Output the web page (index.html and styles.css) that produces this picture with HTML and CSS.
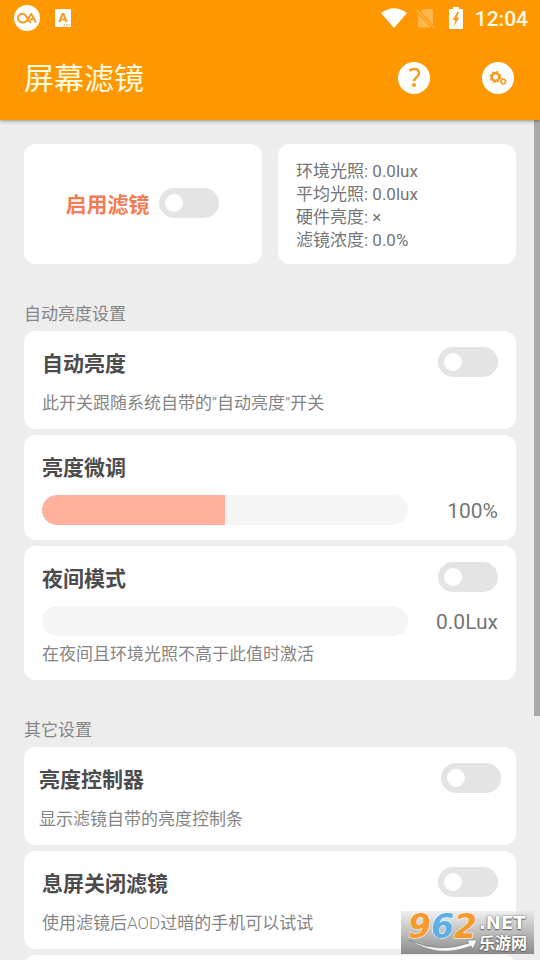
FILE: index.html
```html
<!DOCTYPE html>
<html lang="zh-CN">
<head>
<meta charset="utf-8">
<meta name="viewport" content="width=device-width, initial-scale=1">
<title>屏幕滤镜</title>
<link rel="stylesheet" href="styles.css">
</head>
<body>
<header class="header">
  <div class="status">
    <div class="status-left">
      <svg width="26" height="26" viewBox="0 0 26 26" aria-hidden="true">
        <circle cx="13" cy="13" r="13" fill="#fff"/>
        <path d="M13.600 14.800C12.300 16.800 10.600 17.500 8.800 17.500C6 17.500 4 15.600 4 13.100C4 10.600 6 8.800 8.800 8.800C13 8.800 13.300 17.300 17 17.300M12.600 16.400L17.200 8.800L21.800 17.400M15.800 14.200H19.500" fill="none" stroke="#f59a23" stroke-width="1.900" stroke-linejoin="round"/>
      </svg>
      <svg width="16" height="18" viewBox="0 0 16 18" aria-hidden="true">
        <rect width="16" height="18" rx="1" fill="#fff"/>
        <path d="M3.400 13L6.700 4H9.200L12.600 13H10.200L9.600 11.200H6.300L5.700 13ZM6.900 9.400H9L8 6.300Z" fill="#f59a23" fill-rule="evenodd"/>
        <path d="M8.500 16h1.600M11 16h1.600M13.400 16h1.600" stroke="#f59a23" stroke-width="1"/>
      </svg>
    </div>
    <div class="status-right">
      <svg width="26" height="22" viewBox="0 0 26 22" aria-hidden="true"><path d="M0 6Q13-3.500 26 6L13 21Z" fill="#fff"/></svg>
      <svg class="sim" width="20" height="22" viewBox="0 0 20 22" aria-hidden="true">
        <path d="M6.500 2H14.500Q16 2 16 3.500V17L3.500 4.500ZM1 7L14.500 20.500H2.500Q1 20.500 1 19Z" fill="#ffb74d"/>
        <path d="M-.5 3L17.500 21" stroke="#ffb74d" stroke-width="1.500"/>
      </svg>
      <svg width="18" height="22" viewBox="0 0 18 22" aria-hidden="true">
        <path d="M6 0h6v2h3q1 0 1 1v18q0 1-1 1h-12q-1 0-1-1v-18q0-1 1-1H6Z" fill="#fff"/>
        <path d="M10.500 5L5.500 13H8.200L7 19L12.500 10.500H9.700L12 5.500Z" fill="#f59a23"/>
      </svg>
      <span class="time">12:04</span>
    </div>
  </div>
  <div class="appbar">
    <h1>屏幕滤镜</h1>
    <div class="actions">
      <button type="button" aria-label="帮助">
        <svg width="32" height="32" viewBox="0 0 32 32"><circle cx="16" cy="16" r="16" fill="#fff"/><path d="M11.300 8.800Q13.500 7 16.200 7Q21 7 21 11.600C21 15 16 15.500 16 19.300" fill="none" stroke="#f59a23" stroke-width="2.400"/><circle cx="16" cy="23" r="2" fill="#f59a23"/></svg>
      </button>
      <button type="button" aria-label="设置">
        <svg width="32" height="32" viewBox="0 0 32 32"><circle cx="16" cy="16" r="16" fill="#fff"/><g fill="none" stroke="#f59a23"><circle cx="13.500" cy="15" r="3.700" stroke-width="2.400"/><circle cx="13.500" cy="15" r="5.300" stroke-width="1.500" stroke-dasharray="2.200 1.963"/><circle cx="21.300" cy="19.500" r="2.100" stroke-width="1.400"/><circle cx="21.300" cy="19.500" r="3" stroke-width="1" stroke-dasharray="1.200 1.156"/></g></svg>
      </button>
    </div>
  </div>
</header>

<main class="content">
  <div class="overview">
    <section class="card enable">
      <label for="enable">启用滤镜</label>
      <input class="toggle" type="checkbox" id="enable">
    </section>
    <section class="card info">
      <div>环境光照: 0.0lux</div>
      <div>平均光照: 0.0lux</div>
      <div>硬件亮度: ×</div>
      <div>滤镜浓度: 0.0%</div>
    </section>
  </div>

  <h2>自动亮度设置</h2>
  <div class="group">
    <section class="card">
      <div class="row"><label for="auto">自动亮度</label><input class="toggle" type="checkbox" id="auto"></div>
      <p>此开关跟随系统自带的<span class="thin">“</span>自动亮度<span class="thin">”</span>开关</p>
    </section>
    <section class="card">
      <div class="row"><label for="tune">亮度微调</label></div>
      <div class="slider-row"><input class="slider half" type="range" id="tune" min="0" max="200" value="100"><output for="tune">100%</output></div>
    </section>
    <section class="card">
      <div class="row"><label for="night">夜间模式</label><input class="toggle" type="checkbox" id="night"></div>
      <div class="slider-row"><input class="slider" type="range" id="lux" min="0" max="100" value="0" aria-label="环境光照阈值"><output for="lux">0.0Lux</output></div>
      <p class="close">在夜间且环境光照不高于此值时激活</p>
    </section>
  </div>

  <h2>其它设置</h2>
  <div class="group">
    <section class="card wide">
      <div class="row"><label for="controller">亮度控制器</label><input class="toggle" type="checkbox" id="controller"></div>
      <p>显示滤镜自带的亮度控制条</p>
    </section>
    <section class="card">
      <div class="row"><label for="screenoff">息屏关闭滤镜</label><input class="toggle" type="checkbox" id="screenoff"></div>
      <p>使用滤镜后<span class="thin">AOD</span>过暗的手机可以试试</p>
    </section>
    <section class="card next"></section>
  </div>
  <div class="scroll-thumb"></div>
</main>

<div class="watermark">
  <div class="digits"><span class="orange">9</span><span class="blue">6</span><span class="orange">2</span></div>
  <div class="site"><span class="net">.NET</span><span class="name">乐游网</span></div>
  <svg class="swoosh" width="70" height="14" viewBox="0 0 70 14" aria-hidden="true"><path d="M1 1Q30 15 61 4L59 1L69 1L65 10L63 7Q30 20 1 1Z" fill="#f4f4f4" stroke="#777" stroke-width=".6"/></svg>
</div>
</body>
</html>
```
FILE: styles.css
```css
* { box-sizing: border-box; }

body {
  margin: 0;
  height: 100vh;
  display: flex;
  flex-direction: column;
  overflow: hidden;
  background: #ededed;
  color: #757575;
  font-family: Roboto, "Noto Sans CJK SC", sans-serif;
  font-size: 17px;
}

h1, h2, p { margin: 0; font-weight: 400; }
svg { display: block; }

.header {
  position: relative;
  z-index: 1;
  background: #ff9800;
  box-shadow: 0 1px 4px rgba(0, 0, 0, .4);
}

.status {
  display: flex;
  justify-content: space-between;
  align-items: center;
  height: 36px;
  padding: 0 12px 0 14px;
}

.status-left, .status-right { display: flex; align-items: center; }
.status-left { gap: 15px; }
.status-right { gap: 10px; height: 34px; }
.sim { overflow: visible; }
.time { padding-top: 2px; color: #fffbe6; font-size: 21px; font-weight: 500; line-height: 36px; }

.appbar {
  display: flex;
  justify-content: space-between;
  align-items: center;
  height: 84px;
  padding: 0 26px 0 24px;
}

.appbar h1 { padding-top: 2px; color: #fffbe0; font-size: 30px; line-height: 82px; }
.actions { display: flex; gap: 52px; }
.actions button { padding: 0; border: 0; background: none; }

.content {
  position: relative;
  flex: 1;
  min-height: 0;
  overflow: hidden;
  padding: 24px 24px 0;
}

.card {
  background: #fff;
  border-radius: 12px;
  padding: 16px 18px 14px;
}

.card.wide { padding-left: 15px; padding-right: 15px; }
.card.next { height: 98px; }

.overview {
  display: grid;
  grid-template-columns: 1fr 1fr;
  gap: 16px;
}

.card.enable {
  display: flex;
  align-items: center;
  justify-content: center;
  gap: 9px;
  padding: 0 2px 2px 0;
  color: #f47c54;
  font-size: 21px;
  font-weight: 700;
}

.info {
  height: 120px;
  line-height: 23px;
}

h2 {
  margin: 38px 0 5px;
  color: #858585;
  font-size: 17px;
  line-height: 24px;
}

.group { display: grid; gap: 6px; }

.row {
  display: flex;
  justify-content: space-between;
  align-items: flex-start;
  color: #4c4c4c;
  font-size: 21px;
  font-weight: 700;
  line-height: 34px;
}

.card p {
  margin-top: 11px;
  color: #858585;
  line-height: 23px;
}

.card p.close { margin-top: 6px; }
.thin { font-weight: 300; }

.toggle {
  appearance: none;
  flex: none;
  width: 60px;
  height: 30px;
  margin: 0;
  padding: 6px;
  border-radius: 15px;
  background: #e4e4e4;
}

.toggle::before {
  content: "";
  display: block;
  width: 18px;
  height: 18px;
  border-radius: 50%;
  background: #fff;
}

.toggle:checked { background: #ffb19b; }
.toggle:checked::before { margin-left: auto; }

.slider-row {
  display: grid;
  grid-template-columns: 1fr 90px;
  align-items: start;
  height: 31px;
  margin-top: 10px;
  font-size: 21px;
  line-height: 32px;
  text-align: right;
}

.slider {
  appearance: none;
  width: 100%;
  height: 30px;
  margin: 0;
  border-radius: 15px;
  background: #f5f5f5;
}

.slider.half { background: linear-gradient(90deg, #ffb19b 50%, #f5f5f5 50%); }

.slider::-webkit-slider-thumb {
  appearance: none;
  width: 30px;
  height: 30px;
  background: transparent;
}

.scroll-thumb {
  position: absolute;
  top: 0;
  right: 0;
  width: 6px;
  height: 71%;
  background: #aaa;
}

.watermark {
  position: absolute;
  z-index: 2;
  right: 6px;
  bottom: 6px;
  display: flex;
  width: 133px;
  height: 43px;
  padding-left: 7px;
  background: linear-gradient(rgba(225, 225, 225, .5), #8c8c8c);
  font-family: "DejaVu Sans", "Noto Sans CJK SC", sans-serif;
  font-weight: 700;
}

.digits {
  width: 71px;
  font-size: 33px;
  font-style: italic;
  line-height: 32px;
  -webkit-text-stroke: 1px #fff;
  paint-order: stroke;
}

.orange { color: #f79a2e; }
.blue { color: #5ab0e6; }
.site { color: #fff; text-shadow: 0 0 2px #555, 0 1px 1px #666; }
.site span { display: block; }
.net { font-size: 18px; line-height: 24px; }
.name { font-size: 16px; line-height: 18px; }

.swoosh {
  position: absolute;
  left: 7px;
  bottom: 1px;
}
```
